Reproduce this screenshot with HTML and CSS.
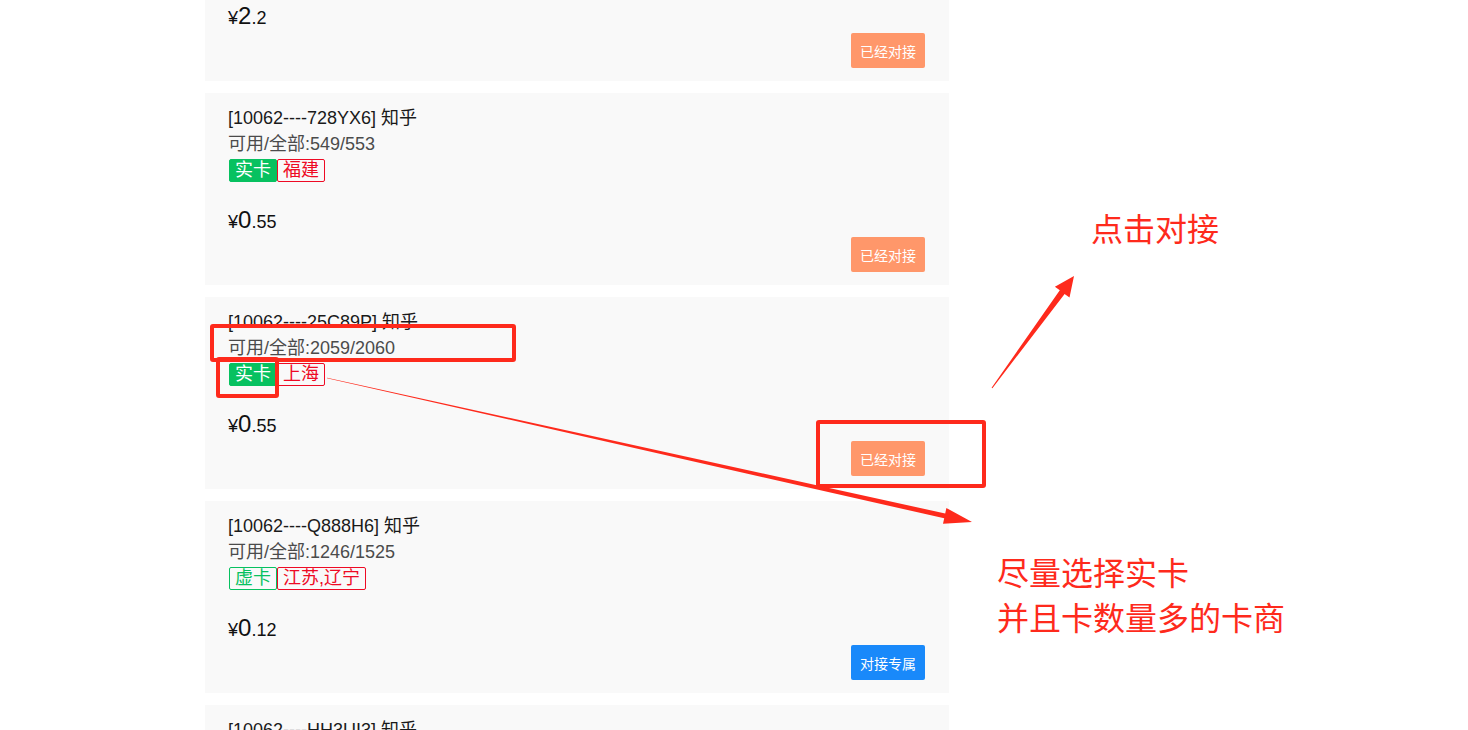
FILE: index.html
```html
<!DOCTYPE html>
<html lang="zh-CN">
<head>
  <meta charset="UTF-8" />
  <title>卡商列表</title>
  <link rel="stylesheet" href="styles.css">
</head>
<body>
  <div class="list">
    <div class="card">
      <div class="title">[10062----7K2M91] 知乎</div>
      <div class="info">可用/全部:318/400</div>
      <div class="tags"><span class="tag real">实卡</span><span class="tag area">广东</span></div>
      <div class="price">¥<b>2</b>.2</div>
      <div class="actions"><button class="btn done">已经对接</button></div>
    </div>

    <div class="card">
      <div class="title">[10062----728YX6] 知乎</div>
      <div class="info">可用/全部:549/553</div>
      <div class="tags"><span class="tag real">实卡</span><span class="tag area">福建</span></div>
      <div class="price">¥<b>0</b>.55</div>
      <div class="actions"><button class="btn done">已经对接</button></div>
    </div>

    <div class="card">
      <div class="title">[10062----25C89P] 知乎</div>
      <div class="info">可用/全部:2059/2060</div>
      <div class="tags"><span class="tag real">实卡</span><span class="tag area">上海</span></div>
      <div class="price">¥<b>0</b>.55</div>
      <div class="actions"><button class="btn done">已经对接</button></div>
    </div>

    <div class="card">
      <div class="title">[10062----Q888H6] 知乎</div>
      <div class="info">可用/全部:1246/1525</div>
      <div class="tags"><span class="tag virtual">虚卡</span><span class="tag area">江苏,辽宁</span></div>
      <div class="price">¥<b>0</b>.12</div>
      <div class="actions"><button class="btn link">对接专属</button></div>
    </div>

    <div class="card">
      <div class="title">[10062----HH3UI3] 知乎</div>
      <div class="info">可用/全部:860/902</div>
      <div class="tags"><span class="tag virtual">虚卡</span><span class="tag area">浙江</span></div>
      <div class="price">¥<b>0</b>.12</div>
      <div class="actions"><button class="btn link">对接专属</button></div>
    </div>
  </div>

  <!-- annotations drawn over the screenshot -->
  <div class="marks">
    <div class="box box-info"></div>
    <div class="box box-tag"></div>
    <div class="box box-btn"></div>
    <svg class="arrows" width="1468" height="730" viewBox="0 0 1468 730">
      <polygon points="991.6,387.7 1059.8,290.3 1054.9,286.8 1074,276 1069.5,297.4 1064.6,293.9 992.4,388.3" />
      <polygon points="327,377.7 945.2,513.5 946.4,508.1 972,522 943,523.7 944.2,518.3 327,378.3" />
    </svg>
    <div class="note note-click">点击对接</div>
    <div class="note note-pick">尽量选择实卡<br>并且卡数量多的卡商</div>
  </div>
</body>
</html>
```

FILE: styles.css
```css
body {
  margin: 0;
  font-family: 'Liberation Sans', 'Noto Sans CJK SC', sans-serif;
  background-color: #fff;
  color: #222;
  overflow: hidden;
  height: 730px;
  position: relative;
}
.list {
  width: 744px;
  margin: -111px 0 0 205px;
  display: flex;
  flex-direction: column;
  gap: 12px;
}
.card {
  background: #f9f9f9;
  padding: 13px 24px 13px 23px;
  height: 166px;
}
.title {
  font-size: 18px;
  line-height: 24px;
  height: 24px;
  color: #1a1a1a;
}
.info {
  margin-top: 2px;
  font-size: 18px;
  line-height: 24px;
  height: 24px;
  color: #4b4b4b;
}
.tags {
  margin-top: 3px;
  display: flex;
  height: 23px;
}
.tag {
  font-size: 18px;
  line-height: 21px;
  padding: 0 5px;
  border: 1px solid;
  border-radius: 2px;
}
.tag.real {
  background: #07c160;
  border-color: #07c160;
  color: #fff;
  margin-left: 1px;
}
.tag.virtual {
  color: #07c160;
  border-color: #07c160;
  margin-left: 1px;
}
.tag.area {
  color: #ee0a24;
  border-color: #ee0a24;
}
.price {
  margin-top: 25px;
  font-size: 18px;
  line-height: 30px;
  height: 30px;
  color: #111;
}
.price b {
  font-weight: normal;
  font-size: 24px;
  line-height: 1;
}
.actions {
  display: flex;
  justify-content: flex-end;
}
.btn {
  height: 35px;
  width: 74px;
  padding: 0;
  border: none;
  border-radius: 2px;
  color: #fff;
  font-family: 'Noto Sans CJK SC', sans-serif;
  font-size: 14px;
  cursor: pointer;
}
.btn.done { background: #ff976a; }
.btn.link { background: #1989fa; }

.marks {
  position: absolute;
  left: 0;
  top: 0;
  width: 1468px;
  height: 730px;
  pointer-events: none;
}
.box {
  position: absolute;
  border: 4px solid #fe2a1c;
  border-radius: 3px;
}
.box-info { left: 210px; top: 324px; width: 298px; height: 30px; }
.box-tag { left: 216px; top: 357px; width: 55px; height: 33px; }
.box-btn { left: 816px; top: 420px; width: 162px; height: 60px; }
.arrows {
  position: absolute;
  left: 0;
  top: 0;
}
.arrows polygon { fill: #fe2a1c; }
.note {
  position: absolute;
  color: #fe2a1c;
  font-family: 'Noto Sans CJK SC', sans-serif;
  font-size: 32px;
  line-height: 45px;
}
.note-click { left: 1091px; top: 205px; }
.note-pick { left: 997px; top: 549px; }
```
